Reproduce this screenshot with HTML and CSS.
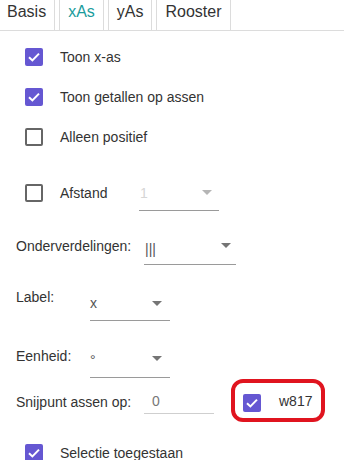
FILE: index.html
```html
<!DOCTYPE html>
<html>
<head>
<meta charset="utf-8">
<link rel="stylesheet" href="styles.css">
</head>
<body>
<div class="tabs">
  <div class="tab">Basis</div>
  <div class="tab active">xAs</div>
  <div class="tab">yAs</div>
  <div class="tab">Rooster</div>
</div>
<div class="panel">
  <div class="row check-row r1">
    <span class="cb on"><svg viewBox="0 0 18 18" width="18" height="18"><path d="M4 9.2 L7.4 12.4 L14 5.6" fill="none" stroke="#fff" stroke-width="2"/></svg></span>
    <span class="lbl">Toon x-as</span>
  </div>
  <div class="row check-row">
    <span class="cb on"><svg viewBox="0 0 18 18" width="18" height="18"><path d="M4 9.2 L7.4 12.4 L14 5.6" fill="none" stroke="#fff" stroke-width="2"/></svg></span>
    <span class="lbl">Toon getallen op assen</span>
  </div>
  <div class="row check-row">
    <span class="cb"></span>
    <span class="lbl">Alleen positief</span>
  </div>
  <div class="row check-row r4">
    <span class="cb"></span>
    <span class="lbl lbl-afstand">Afstand</span>
    <div class="dd dd-afstand disabled">
      <span class="val">1</span><span class="arrow"></span>
    </div>
  </div>
  <div class="row field-row r5">
    <span class="flabel w128">Onderverdelingen:</span>
    <div class="dd dd-onder">
      <span class="val">|||</span><span class="arrow"></span>
    </div>
  </div>
  <div class="row field-row r6">
    <span class="flabel w74">Label:</span>
    <div class="dd dd-label">
      <span class="val">x</span><span class="arrow"></span>
    </div>
  </div>
  <div class="row field-row r7">
    <span class="flabel w74">Eenheid:</span>
    <div class="dd dd-eenheid">
      <span class="val">°</span><span class="arrow"></span>
    </div>
  </div>
  <div class="row field-row r8">
    <span class="flabel w128">Snijpunt assen op:</span>
    <div class="input"><span class="val">0</span></div>
    <div class="highlight">
      <span class="cb on"><svg viewBox="0 0 18 18" width="18" height="18"><path d="M4 9.2 L7.4 12.4 L14 5.6" fill="none" stroke="#fff" stroke-width="2"/></svg></span>
      <span class="lbl">w817</span>
    </div>
  </div>
  <div class="row check-row r9">
    <span class="cb on"><svg viewBox="0 0 18 18" width="18" height="18"><path d="M4 9.2 L7.4 12.4 L14 5.6" fill="none" stroke="#fff" stroke-width="2"/></svg></span>
    <span class="lbl">Selectie toegestaan</span>
  </div>
</div>
</body>
</html>
```
FILE: styles.css
```css
* { box-sizing: border-box; }
html, body { margin: 0; padding: 0; background: #fff; }
body {
  width: 344px;
  height: 460px;
  overflow: hidden;
  font-family: "Liberation Sans", Arial, sans-serif;
  font-size: 14px;
  color: #333;
}
.tabs {
  display: flex;
  gap: 4px;
  margin-left: -2px;
  height: 31px;
  border-bottom: 1px solid #dcdcdc;
}
.tab {
  margin-top: -1px;
  height: 31px;
  padding: 0 8px 6px;
  line-height: 24px;
  font-size: 16px;
  color: #333;
  border: 1px solid #dcdcdc;
  border-bottom: none;
}
.tab.active { color: #1a9c9c; }
.panel { padding-left: 16px; }
.row { display: flex; }
.check-row { height: 40px; align-items: center; padding-left: 9px; }
.r1 { margin-top: 6px; }
.r4 { margin-top: 16px; }
.field-row { align-items: flex-start; }
.r5 { margin-top: 21px; }
.r6 { margin-top: 21px; }
.r7 { margin-top: 22px; }
.r8 { margin-top: 1px; }
.r9 { margin-top: 11px; }
.cb {
  width: 18px;
  height: 18px;
  border: 2px solid #666;
  border-radius: 2px;
  flex: none;
  display: flex;
}
.cb.on { background: #6557d2; border: none; }
.lbl { margin-left: 17px; line-height: 20px; }
.lbl-afstand { width: 79px; }
.flabel { line-height: 20px; flex: none; }
.w128 { width: 128px; }
.w74 { width: 74px; }
.r5 .flabel { margin-top: 2px; }
.r6 .flabel { margin-top: 1px; }
.r7 .flabel { margin-top: 3px; }
.r8 .flabel { margin-top: 13px; }
.dd {
  display: flex;
  align-items: center;
  border-bottom: 1px solid #9a9a9a;
  flex: none;
}
.dd .val { flex: 1; color: #555; }
.arrow {
  width: 0;
  height: 0;
  border-left: 5px solid transparent;
  border-right: 5px solid transparent;
  border-top: 5px solid #757575;
}
.dd-afstand { width: 80px; height: 36px; padding-left: 1px; }
.dd-afstand .arrow { margin-right: 7px; }
.dd.disabled .val { color: #d6d6d6; }
.dd.disabled .arrow { border-top-color: #b5b5b5; }
.dd-onder { width: 92px; height: 31px; padding-left: 1px; }
.dd-onder .arrow { margin-right: 5px; margin-bottom: 8px; }
.dd-label, .dd-eenheid { width: 80px; height: 35px; }
.dd-label .arrow { margin-right: 8px; }
.dd-eenheid .arrow { margin-right: 8px; margin-bottom: 4px; }
.input {
  width: 70px;
  height: 25px;
  margin-top: 10px;
  padding-left: 8px;
  display: flex;
  align-items: center;
  border-bottom: 1px solid #cfcfcf;
  flex: none;
}
.input .val { color: #777; }
.highlight {
  margin-left: 17px;
  width: 94px;
  height: 43px;
  border: 4px solid #e0141f;
  border-radius: 12px;
  display: flex;
  align-items: center;
  padding-left: 8px;
}
.highlight .cb { margin-top: 4px; }
.highlight .lbl { margin-left: 18px; }
```
